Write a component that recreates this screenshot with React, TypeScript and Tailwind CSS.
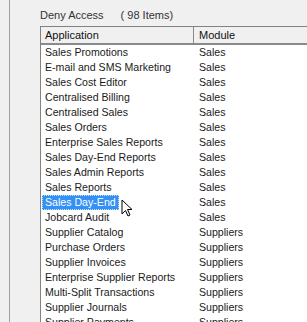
const rows: [string, string][] = [
  ["Sales Promotions", "Sales"],
  ["E-mail and SMS Marketing", "Sales"],
  ["Sales Cost Editor", "Sales"],
  ["Centralised Billing", "Sales"],
  ["Centralised Sales", "Sales"],
  ["Sales Orders", "Sales"],
  ["Enterprise Sales Reports", "Sales"],
  ["Sales Day-End Reports", "Sales"],
  ["Sales Admin Reports", "Sales"],
  ["Sales Reports", "Sales"],
  ["Sales Day-End", "Sales"],
  ["Jobcard Audit", "Sales"],
  ["Supplier Catalog", "Suppliers"],
  ["Purchase Orders", "Suppliers"],
  ["Supplier Invoices", "Suppliers"],
  ["Enterprise Supplier Reports", "Suppliers"],
  ["Multi-Split Transactions", "Suppliers"],
  ["Supplier Journals", "Suppliers"],
  ["Supplier Payments", "Suppliers"],
];

function Cursor() {
  return (
    <svg width="13" height="19" viewBox="0 0 13 19" className="absolute left-[80px] top-[4px]">
      <path d="M1 1 L1 15 L4.5 11.5 L7 17 L9 16 L6.5 10.5 L11 10.5 Z" fill="#fff" stroke="#000" strokeWidth="1" strokeLinejoin="round" />
    </svg>
  );
}

export default function App() {
  return (
    <div className="flex h-[322px] w-[307px] overflow-hidden bg-[#f0f0f0] font-['Liberation_Sans',Arial,sans-serif] text-[10.6px] text-[#1a1a1a]">
      <div className="ml-[9px] w-px shrink-0 bg-[#a0a0a0]" />
      <div className="flex min-w-0 flex-1 flex-col pl-[30px]">
        <div className="flex h-[26px] shrink-0 items-center gap-[17px] pt-[5px] text-[11px] text-[#333]">
          <span>Deny Access</span>
          <span>( 98 Items)</span>
        </div>
        <div className="flex-1 border-l border-t border-[#828282] bg-white">
          <div className="flex h-[18px] border-b-2 border-[#8a8a8a] bg-[#f0f0f0] text-[11px] text-[#111]">
            <div className="flex w-[153px] items-center border-r border-[#8a8a8a] pl-[4px] pt-px">Application</div>
            <div className="flex flex-1 items-center pl-[5px] pt-px">Module</div>
          </div>
          {rows.map(([app, mod]) => {
            const sel = app === "Sales Day-End";
            return (
              <div key={app} className="flex h-[15px] items-center whitespace-nowrap leading-[15px]">
                <div className="relative w-[154px] pl-px">
                  <span
                    className={
                      sel
                        ? "inline-block border border-dotted border-[#cbe2ff] bg-[#3390f5] px-[2px] leading-[13px] text-white"
                        : "inline-block px-[3px]"
                    }
                  >
                    {app}
                  </span>
                  {sel && <Cursor />}
                </div>
                <div className="pl-[4px]">{mod}</div>
              </div>
            );
          })}
        </div>
      </div>
    </div>
  );
}
